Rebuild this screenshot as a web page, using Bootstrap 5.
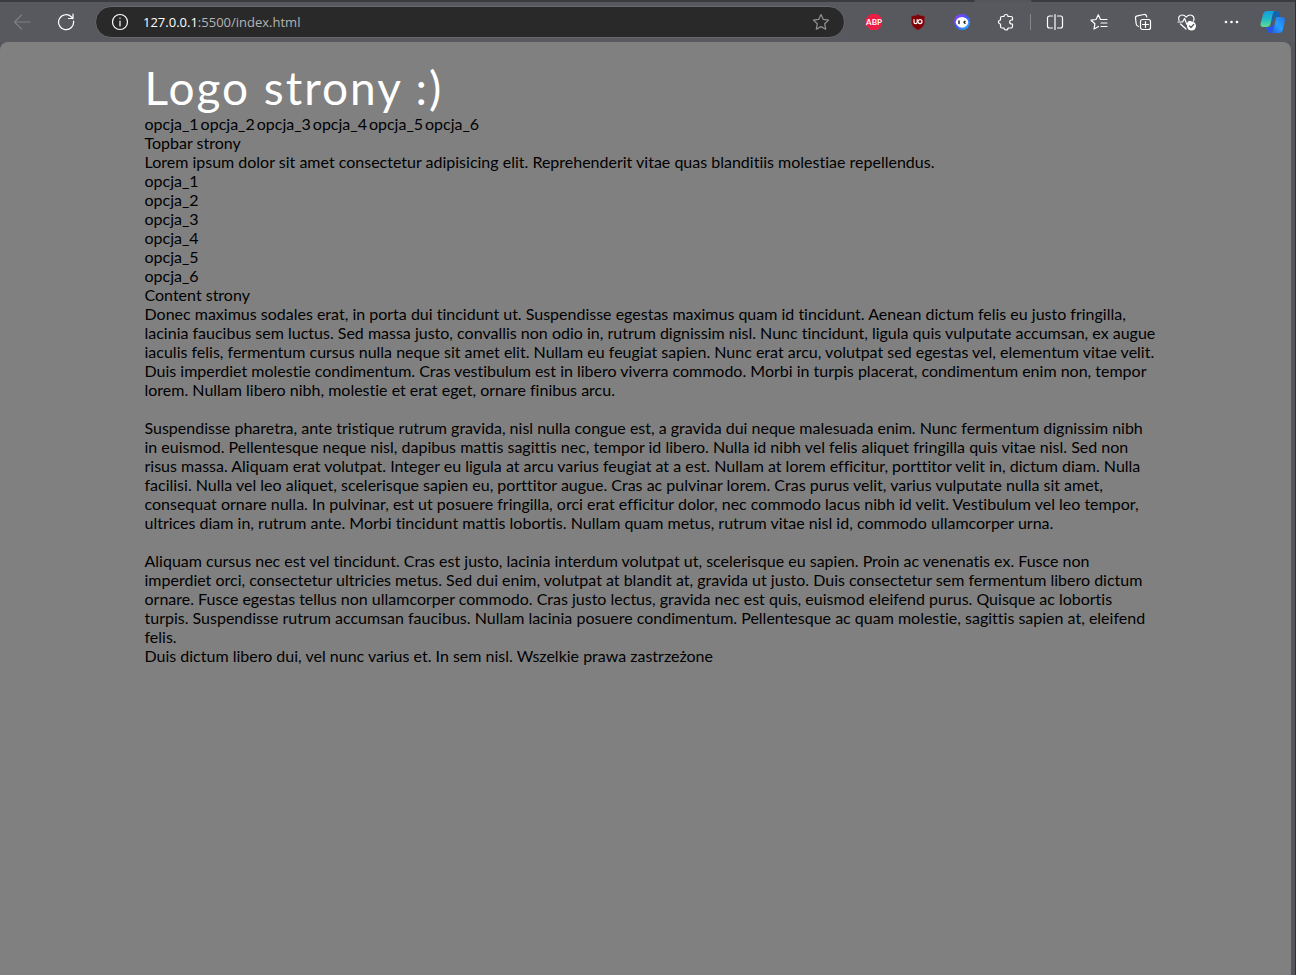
<!DOCTYPE html>
<html lang="pl">
<head>
<meta charset="utf-8">
<meta name="viewport" content="width=device-width, initial-scale=1">
<title>Logo strony</title>
<link href="https://cdn.jsdelivr.net/npm/bootstrap@5.3.0/dist/css/bootstrap.min.css" rel="stylesheet">
<style>
  body { background: #55565c; font-family: Lato, sans-serif; font-size: 16px; line-height: 19px; color: #000; border-right: 1px solid #27333a; }
  .tab-strip { height: 2px; }
  .tab-strip span { background: #3a3a3f; border-radius: 0 0 4px 0; }
  .tab-strip .tab-gap { background: none; width: 56px; }
  .tab-strip .tabs-after { width: 264px; border-radius: 0 0 0 4px; }
  .toolbar { height: 40px; background: #58595e; padding-right: 2px; }
  .tool { width: 44px; height: 40px; color: #fff; flex: none; }
  .tool svg, .address svg { display: block; fill: none; stroke: currentColor; stroke-width: 1.2; stroke-linecap: round; stroke-linejoin: round; }
  .tool:disabled { color: #929297; }
  .tool-wide { width: 40px; }
  .divider { width: 1px; height: 16px; background: #85868b; margin: 0 2px; }
  .address { height: 32px; background: #292929; border: 1px solid #67686c; border-radius: 16px; margin: 0 7px; padding: 0 3px 0 15px; color: #fff; }
  .address-text { font: 13px/20px "Open Sans", sans-serif; color: #b4b4b4; margin-left: 14px; }
  .address-text b { color: #fff; font-weight: 400; }
  .star { width: 40px; color: #929292; }
  .viewport { background: #808080; border-radius: 8px 8px 0 0; margin-right: 4px; padding: 19px 2px 0 0; }
  .page { max-width: 1000px; font-variant-ligatures: none; }
  .logo { font-size: 46px; line-height: 53px; letter-spacing: 2px; color: #fff; }
  .page a { color: #000; text-decoration: none; }
  .menu { gap: 2px; }
  .copy { margin-right: -20px; }
</style>
</head>
<body class="d-flex flex-column min-vh-100">
<header>
  <div class="tab-strip d-flex"><span class="flex-grow-1"></span><span class="tab-gap"></span><span class="tabs-after"></span></div>
  <div class="toolbar d-flex align-items-center">
    <button class="tool btn border-0 p-0 d-flex align-items-center justify-content-center" disabled aria-label="Wstecz"><svg width="18" height="18" viewBox="0 0 18 18"><path d="M17 9H1.500M8.500 2 1.500 9l7 7"/></svg></button>
    <button class="tool btn border-0 p-0 d-flex align-items-center justify-content-center" aria-label="Odśwież"><svg width="18" height="18" viewBox="0 0 18 18"><path d="M16.500 8a7.500 7.500 0 1 1-2-4l1.500 1.500M16 1v4.500h-4.500"/></svg></button>
    <div class="address d-flex align-items-center flex-grow-1">
      <svg width="18" height="18" viewBox="0 0 18 18"><circle cx="9" cy="9" r="7.500"/><path d="M9 8v5M9 5.200v.3"/></svg>
      <div class="address-text flex-grow-1"><b>127.0.0.1</b>:5500/index.html</div>
      <button class="star btn border-0 p-0 d-flex justify-content-center" aria-label="Ulubione"><svg width="18" height="18" viewBox="0 0 18 18"><path d="m9 1.500 2.300 4.900 5.300.7-3.900 3.700 1 5.400L9 13.600l-4.700 2.600 1-5.400-3.900-3.700 5.300-.7z"/></svg></button>
    </div>
    <button class="tool btn border-0 p-0 d-flex align-items-center justify-content-center" aria-label="Adblock Plus"><svg width="18" height="18" viewBox="0 0 18 18"><path d="M5.500 1h7L17 5.500v7L12.500 17h-7L1 12.500v-7z" fill="#ed1e45" stroke="none"/><text x="9" y="12" text-anchor="middle" fill="#fff" stroke="none" font-family="Lato, sans-serif" font-size="8" font-weight="700">ABP</text></svg></button>
    <button class="tool btn border-0 p-0 d-flex align-items-center justify-content-center" aria-label="uBlock"><svg width="16" height="18" viewBox="0 0 16 18"><path d="M8 1.500c2 1.200 4.500 1.500 6.500 1.500v6c0 3.500-2.500 6-6.500 8-4-2-6.500-4.500-6.500-8V3c2 0 4.500-.3 6.500-1.500z" fill="#800006" stroke="#7b3038" stroke-width=".5"/><path d="M4 6.500v2.500c0 1 .6 1.600 1.600 1.600s1.600-.6 1.600-1.600V6.500"/><circle cx="10" cy="8.600" r="2"/></svg></button>
    <button class="tool btn border-0 p-0 d-flex align-items-center justify-content-center" aria-label="Asystent"><svg width="18" height="18" viewBox="0 0 18 18"><defs><linearGradient id="ring" x1="0" y1="0" x2="1" y2="1"><stop offset="0" stop-color="#a43cff"/><stop offset=".5" stop-color="#4054ff"/><stop offset="1" stop-color="#28c6ff"/></linearGradient></defs><circle cx="9" cy="9" r="8" fill="url(#ring)" stroke="none"/><ellipse cx="9" cy="9.300" rx="6.200" ry="5.400" fill="#fff" stroke="none"/><path d="M6 8v2.500m6-2.300-1 1.100 1 1" stroke="#111" stroke-width="1.400"/></svg></button>
    <button class="tool btn border-0 p-0 d-flex align-items-center justify-content-center" aria-label="Rozszerzenia"><svg width="18" height="18" viewBox="0 0 18 18"><path d="M5 3.500h2a2 2 0 0 1 4 0h3a1.500 1.500 0 0 1 1.500 1.500v2h-.8a2 2 0 0 0 0 4h.8v2.500a1.500 1.500 0 0 1-1.500 1.500h-3a2 2 0 0 1-4 0H5A1.500 1.500 0 0 1 3.500 13.500V11a2 2 0 0 1 0-4V5A1.500 1.500 0 0 1 5 3.500z"/></svg></button>
    <div class="divider"></div>
    <button class="tool btn border-0 p-0 d-flex align-items-center justify-content-center" aria-label="Podziel ekran"><svg width="18" height="18" viewBox="0 0 18 18"><path d="M6.500 3h-3a2 2 0 0 0-2 2v8a2 2 0 0 0 2 2h3m5-12h3a2 2 0 0 1 2 2v8a2 2 0 0 1-2 2h-3M9 1.500v15"/></svg></button>
    <button class="tool btn border-0 p-0 d-flex align-items-center justify-content-center" aria-label="Lista ulubionych"><svg width="18" height="18" viewBox="0 0 18 18"><path d="M8.500 13.500 4 16l.9-5.200L1 7.200l5-.7 2.300-4.700 2.200 4.700H17M11 10h6m-6 3.500h6"/></svg></button>
    <button class="tool btn border-0 p-0 d-flex align-items-center justify-content-center" aria-label="Kolekcje"><svg width="18" height="18" viewBox="0 0 18 18"><rect x="6.500" y="6.500" width="10" height="10" rx="2"/><path d="M11.500 8.500v6m-3-3h6M4.500 13.500C3 13 2.300 12 2.200 11L1.500 5A2 2 0 0 1 3.200 2.800L10 1.500c1.300-.2 2.500.8 2.800 2.500"/></svg></button>
    <button class="tool btn border-0 p-0 d-flex align-items-center justify-content-center" aria-label="Stan przeglądarki"><svg width="20" height="18" viewBox="0 0 20 18"><path d="M2 7.500C.7 4.500 2.500 2 5.200 2 7 2 8.300 3 9.200 4.200 10.200 3 11.500 2 13.200 2c3 0 4.800 3 3.300 6M1 9h4.500l2-3.500 2.500 6 1.800-3h2M3.500 11l5.500 5"/><circle cx="14.500" cy="13" r="4.500" fill="#fff" stroke="none"/><path d="m12.500 13 1.500 1.500 2.700-3" stroke="#58595e"/></svg></button>
    <button class="tool btn border-0 p-0 d-flex align-items-center justify-content-center" aria-label="Więcej"><svg width="18" height="18" viewBox="0 0 18 18"><g fill="#fff" stroke="none"><circle cx="4" cy="9" r="1.300"/><circle cx="9.500" cy="9" r="1.300"/><circle cx="15" cy="9" r="1.300"/></g></svg></button>
    <button class="tool tool-wide btn border-0 p-0 d-flex align-items-center justify-content-center" aria-label="Copilot"><svg width="26" height="24" viewBox="0 0 26 24"><defs><linearGradient id="teal" x1="0" y1="0" x2="0" y2="1"><stop offset="0" stop-color="#159bdc"/><stop offset=".5" stop-color="#20b9c9"/><stop offset="1" stop-color="#63dc91"/></linearGradient><linearGradient id="blue" x1="0" y1="1" x2="1" y2="0"><stop offset="0" stop-color="#2453e8"/><stop offset=".5" stop-color="#239eff"/><stop offset="1" stop-color="#2472e0"/></linearGradient></defs><g stroke="none"><path d="M13 1h3c2 0 3 1 3.500 3l.7 3h-3.700c-2 0-3 1-3.500 3L11 17z" fill="#1264b0"/><path d="M6 17h6l2-7-1 10c-.5 2-1.500 3-3 3-2 0-2.700-1-3.200-3z" fill="#2456ea"/><path d="M7 1h9c-2 0-2.700 1-3.300 3L10.500 14c-.7 2-1.500 3-4 3H3c-2 0-3-1.500-2.300-4L3.200 4C4 2 5 1 7 1z" fill="url(#teal)"/><path d="M17 7h5c2.400 0 3.500 1.500 2.800 4l-2 9c-.7 2-1.700 3-4 3H10c2 0 2.600-1 3.200-3l2.500-10c.4-2 .5-3 1.300-3z" fill="url(#blue)"/></g></svg></button>
  </div>
</header>
<div class="viewport flex-grow-1">
  <main class="page mx-auto">
    <div class="logo">Logo strony :)</div>
    <nav class="menu d-flex flex-wrap"><a href="#">opcja_1</a> <a href="#">opcja_2</a> <a href="#">opcja_3</a> <a href="#">opcja_4</a> <a href="#">opcja_5</a> <a href="#">opcja_6</a></nav>
    <div>Topbar strony</div>
    <div>Lorem ipsum dolor sit amet consectetur adipisicing elit. Reprehenderit vitae quas blanditiis molestiae repellendus.</div>
    <nav class="d-flex flex-column align-items-start"><a href="#">opcja_1</a><a href="#">opcja_2</a><a href="#">opcja_3</a><a href="#">opcja_4</a><a href="#">opcja_5</a><a href="#">opcja_6</a></nav>
    <div>Content strony</div>
    <div class="copy">
      Donec maximus sodales erat, in porta dui tincidunt ut. Suspendisse egestas maximus quam id tincidunt. Aenean dictum felis eu justo fringilla,<br>
      lacinia faucibus sem luctus. Sed massa justo, convallis non odio in, rutrum dignissim nisl. Nunc tincidunt, ligula quis vulputate accumsan, ex augue<br>
      iaculis felis, fermentum cursus nulla neque sit amet elit. Nullam eu feugiat sapien. Nunc erat arcu, volutpat sed egestas vel, elementum vitae velit.<br>
      Duis imperdiet molestie condimentum. Cras vestibulum est in libero viverra commodo. Morbi in turpis placerat, condimentum enim non, tempor<br>
      lorem. Nullam libero nibh, molestie et erat eget, ornare finibus arcu.
      <br><br>
      Suspendisse pharetra, ante tristique rutrum gravida, nisl nulla congue est, a gravida dui neque malesuada enim. Nunc fermentum dignissim nibh<br>
      in euismod. Pellentesque neque nisl, dapibus mattis sagittis nec, tempor id libero. Nulla id nibh vel felis aliquet fringilla quis vitae nisl. Sed non<br>
      risus massa. Aliquam erat volutpat. Integer eu ligula at arcu varius feugiat at a est. Nullam at lorem efficitur, porttitor velit in, dictum diam. Nulla<br>
      facilisi. Nulla vel leo aliquet, scelerisque sapien eu, porttitor augue. Cras ac pulvinar lorem. Cras purus velit, varius vulputate nulla sit amet,<br>
      consequat ornare nulla. In pulvinar, est ut posuere fringilla, orci erat efficitur dolor, nec commodo lacus nibh id velit. Vestibulum vel leo tempor,<br>
      ultrices diam in, rutrum ante. Morbi tincidunt mattis lobortis. Nullam quam metus, rutrum vitae nisl id, commodo ullamcorper urna.
      <br><br>
      Aliquam cursus nec est vel tincidunt. Cras est justo, lacinia interdum volutpat ut, scelerisque eu sapien. Proin ac venenatis ex. Fusce non<br>
      imperdiet orci, consectetur ultricies metus. Sed dui enim, volutpat at blandit at, gravida ut justo. Duis consectetur sem fermentum libero dictum<br>
      ornare. Fusce egestas tellus non ullamcorper commodo. Cras justo lectus, gravida nec est quis, euismod eleifend purus. Quisque ac lobortis<br>
      turpis. Suspendisse rutrum accumsan faucibus. Nullam lacinia posuere condimentum. Pellentesque ac quam molestie, sagittis sapien at, eleifend<br>
      felis.
    </div>
    <footer>Duis dictum libero dui, vel nunc varius et. In sem nisl. Wszelkie prawa zastrzeżone</footer>
  </main>
</div>
<script src="https://cdn.jsdelivr.net/npm/bootstrap@5.3.0/dist/js/bootstrap.bundle.min.js"></script>
</body>
</html>
